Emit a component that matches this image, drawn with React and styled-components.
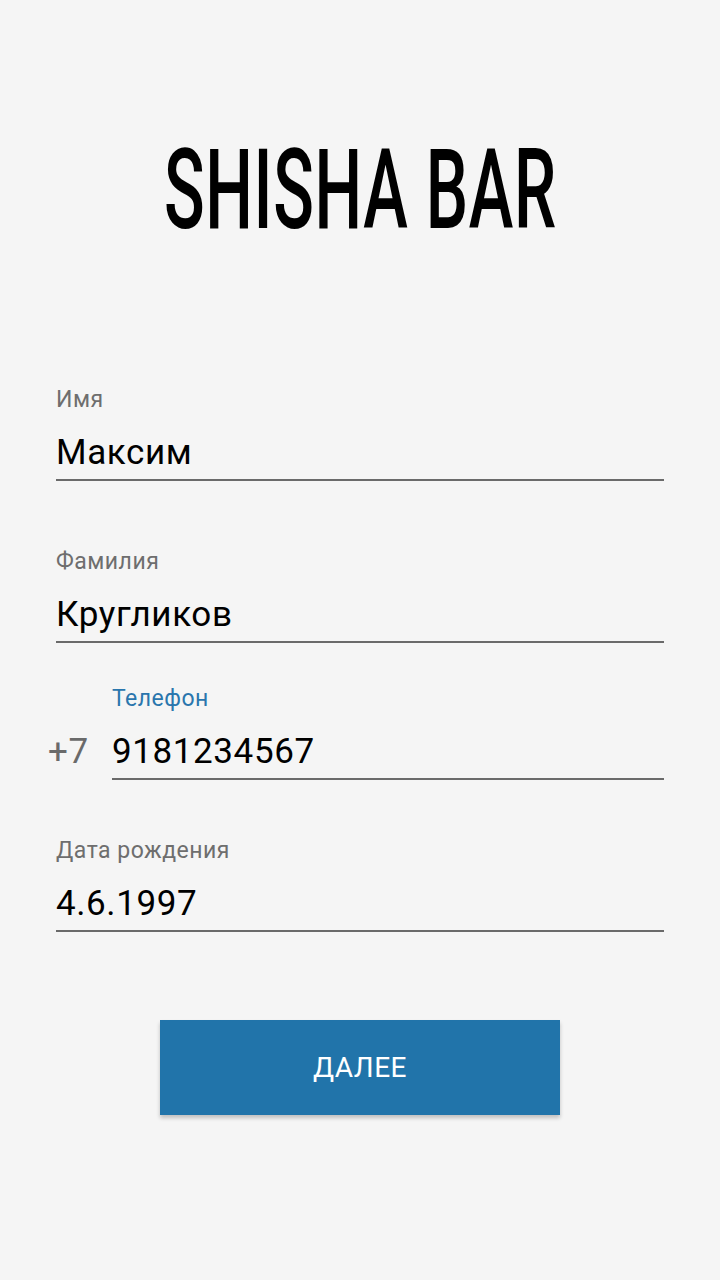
import React from "react";
import styled, { createGlobalStyle } from "styled-components";

const Global = createGlobalStyle`
  html, body { margin: 0; padding: 0; background: #f5f5f5; }
  body { font-family: Roboto, "Noto Sans", sans-serif; }
`;

const Screen = styled.div`
  width: 720px;
  height: 1280px;
  background: #f5f5f5;
  display: flex;
  flex-direction: column;
  align-items: center;
  overflow: hidden;
`;

const TitleWrap = styled.div`
  height: 120px;
  margin-top: 130px;
  display: flex;
  align-items: center;
  justify-content: center;
`;

const Title = styled.h1`
  margin: 0;
  font-family: Roboto, "DejaVu Sans", sans-serif;
  font-weight: 500;
  font-size: 112px;
  line-height: 1;
  color: #000;
  letter-spacing: 1px;
  transform: scaleX(0.6);
  white-space: nowrap;
`;

const Form = styled.div`
  width: 608px;
  margin-top: 137px;
  display: flex;
  flex-direction: column;
`;

const Field = styled.div`
  display: flex;
  flex-direction: column;
  flex: 1;
  margin-top: ${(p) => p.$gap || 0}px;
`;

const Label = styled.div`
  font-size: 23px;
  line-height: 26px;
  letter-spacing: 0.5px;
  color: ${(p) => (p.$active ? "#2a76ad" : "#6e6e6e")};
`;

const Value = styled.div`
  font-size: 35px;
  line-height: 40px;
  letter-spacing: 0.6px;
  color: #000;
  margin-top: 20px;
  padding-bottom: 6px;
  border-bottom: 2px solid #6a6a6a;
`;

const PhoneRow = styled.div`
  display: flex;
  align-items: flex-end;
  margin-left: -8px;
`;

const Prefix = styled.div`
  width: 64px;
  flex: none;
  font-size: 35px;
  line-height: 40px;
  letter-spacing: 0.6px;
  color: #6a6a6a;
  padding-bottom: 8px;
`;

const Button = styled.button`
  margin-top: 88px;
  width: 400px;
  height: 95px;
  border: none;
  border-radius: 0;
  background: #2174aa;
  color: #fff;
  font-family: Roboto, sans-serif;
  font-size: 28px;
  font-weight: 400;
  letter-spacing: 0.5px;
  box-shadow: 0 3px 4px rgba(0, 0, 0, 0.22);
`;

export default function App() {
  return (
    <Screen>
      <Global />
      <TitleWrap>
        <Title>SHISHA BAR</Title>
      </TitleWrap>
      <Form>
        <Field>
          <Label>Имя</Label>
          <Value>Максим</Value>
        </Field>
        <Field $gap={68}>
          <Label>Фамилия</Label>
          <Value>Кругликов</Value>
        </Field>
        <PhoneRow>
          <Prefix>+7</Prefix>
          <Field $gap={43}>
            <Label $active>Телефон</Label>
            <Value>9181234567</Value>
          </Field>
        </PhoneRow>
        <Field $gap={58}>
          <Label>Дата рождения</Label>
          <Value>4.6.1997</Value>
        </Field>
      </Form>
      <Button>ДАЛЕЕ</Button>
    </Screen>
  );
}
